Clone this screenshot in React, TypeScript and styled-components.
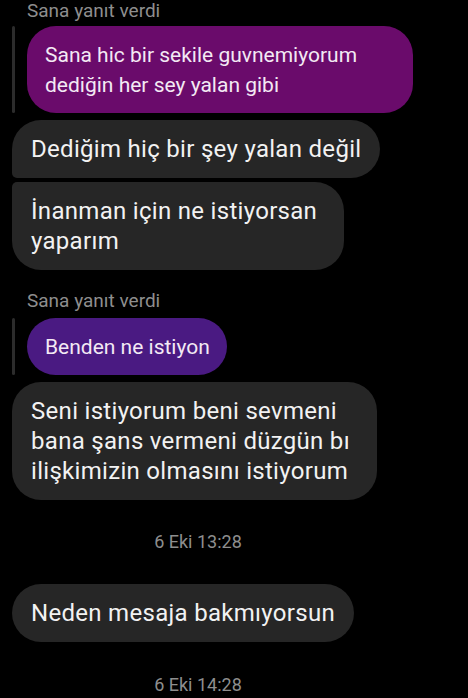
import React from 'react'
import styled, { createGlobalStyle } from 'styled-components'

const GlobalStyle = createGlobalStyle`
  html, body {
    margin: 0;
    padding: 0;
    background: #000;
  }
  body {
    font-family: Roboto, "Noto Sans", sans-serif;
    -webkit-font-smoothing: antialiased;
  }
`

const Thread = styled.div`
  width: 468px;
  height: 698px;
  overflow: hidden;
  background: #000;
`

const Messages = styled.div`
  display: flex;
  flex-direction: column;
  align-items: flex-start;
  padding: 1px 12px 0;
`

const ReplyLabel = styled.div<{ $top?: number }>`
  font-size: 19px;
  line-height: 19px;
  color: #8e8e8e;
  padding-left: 15px;
  margin-top: ${({ $top }) => $top ?? 0}px;
`

const Quote = styled.div<{ $top: number }>`
  display: flex;
  align-items: stretch;
  gap: 12px;
  margin-top: ${({ $top }) => $top}px;
`

const QuoteBar = styled.div`
  width: 3px;
  border-radius: 2px;
  background: #2c2c2c;
`

const QuotedBubble = styled.div<{ $tone: string; $padEnd?: number }>`
  background: ${({ $tone }) => $tone};
  color: #f3e9f4;
  font-size: 21px;
  line-height: 30px;
  padding: 14px ${({ $padEnd }) => $padEnd ?? 17}px 13px 18px;
  border-radius: 29px;
  white-space: pre-line;
`

const Group = styled.div<{ $top: number }>`
  display: flex;
  flex-direction: column;
  align-items: flex-start;
  gap: 4px;
  margin-top: ${({ $top }) => $top}px;
`

type Corner = 'single' | 'first' | 'last'

const radius = (c: Corner) => {
  if (c === 'first') return '29px 29px 29px 5px'
  if (c === 'last') return '5px 29px 29px 29px'
  return '29px'
}

const Bubble = styled.div<{ $corner: Corner; $wrapped?: boolean }>`
  background: #262626;
  color: #f2f2f2;
  font-size: 24px;
  letter-spacing: 0.3px;
  line-height: 30px;
  padding: 14px ${({ $wrapped }) => ($wrapped ? 27 : 19)}px 14px 19px;
  border-radius: ${({ $corner }) => radius($corner)};
  white-space: pre-line;
`

const Stamp = styled.div<{ $top: number }>`
  align-self: stretch;
  display: flex;
  justify-content: center;
  padding-right: 72px;
  font-size: 18px;
  line-height: 20px;
  color: #8e8e8e;
  margin-top: ${({ $top }) => $top}px;
`

export default function App() {
  return (
    <Thread>
      <GlobalStyle />
      <Messages>
        <ReplyLabel>Sana yanıt verdi</ReplyLabel>
        <Quote $top={6}>
          <QuoteBar />
          <QuotedBubble $tone="#6a0b6b" $padEnd={56}>
            {'Sana hic bir sekile guvnemiyorum\ndediğin her sey yalan gibi'}
          </QuotedBubble>
        </Quote>
        <Group $top={7}>
          <Bubble $corner="first">Dediğim hiç bir şey yalan değil</Bubble>
          <Bubble $corner="last" $wrapped>
            {'İnanman için ne istiyorsan\nyaparım'}
          </Bubble>
        </Group>
        <ReplyLabel $top={21}>Sana yanıt verdi</ReplyLabel>
        <Quote $top={8}>
          <QuoteBar />
          <QuotedBubble $tone="#4a1a82">Benden ne istiyon</QuotedBubble>
        </Quote>
        <Group $top={7}>
          <Bubble $corner="single" $wrapped>
            {'Seni istiyorum beni sevmeni\nbana şans vermeni düzgün bı\nilişkimizin olmasını istiyorum'}
          </Bubble>
        </Group>
        <Stamp $top={32}>6 Eki 13:28</Stamp>
        <Group $top={32}>
          <Bubble $corner="single">Neden mesaja bakmıyorsun</Bubble>
        </Group>
        <Stamp $top={33}>6 Eki 14:28</Stamp>
      </Messages>
    </Thread>
  )
}
